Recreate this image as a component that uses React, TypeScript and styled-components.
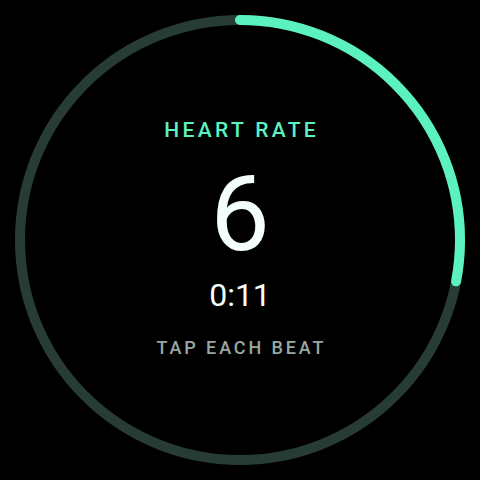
import React from "react";
import styled, { createGlobalStyle } from "styled-components";

const Global = createGlobalStyle`
  html, body { margin: 0; padding: 0; background: #000; }
  body { font-family: Roboto, "Noto Sans", sans-serif; }
`;

const Screen = styled.div`
  width: 480px;
  height: 480px;
  background: #000;
  display: grid;
  place-items: center;
  overflow: hidden;
`;

const Ring = styled.svg`
  grid-area: 1 / 1;
  width: 480px;
  height: 480px;
  display: block;
`;

const Content = styled.div`
  grid-area: 1 / 1;
  align-self: start;
  display: flex;
  flex-direction: column;
  align-items: center;
  padding-top: 119.5px;
`;

const Label = styled.div<{ $tone: "accent" | "muted"; $size: number; $gap: number }>`
  font-size: ${(p) => p.$size}px;
  line-height: 1;
  font-weight: 500;
  letter-spacing: 0.16em;
  padding-left: 0.16em;
  color: ${(p) => (p.$tone === "accent" ? "#5cf2c0" : "#9aa8a2")};
  margin-top: ${(p) => p.$gap}px;
`;

const Count = styled.div`
  font-size: 106px;
  line-height: 1;
  font-weight: 400;
  color: #f4fff9;
  margin-top: 20.5px;
`;

const Timer = styled.div`
  font-size: 32px;
  line-height: 1;
  font-weight: 400;
  color: #f4fff9;
  margin-top: 12px;
`;

const R = 220;
const C = 2 * Math.PI * R;
const progress = 0.28;

export default function App() {
  return (
    <>
      <Global />
      <Screen>
        <Ring viewBox="0 0 480 480">
          <circle cx="240" cy="240" r={R} fill="none" stroke="#263c34" strokeWidth="10" />
          <circle
            cx="240"
            cy="240"
            r={R}
            fill="none"
            stroke="#5cf2c0"
            strokeWidth="10"
            strokeLinecap="round"
            strokeDasharray={`${C * progress} ${C}`}
            transform="rotate(-90 240 240)"
          />
        </Ring>
        <Content>
          <Label $tone="accent" $size={21} $gap={0}>HEART RATE</Label>
          <Count>6</Count>
          <Timer>0:11</Timer>
          <Label $tone="muted" $size={18} $gap={27.5}>TAP EACH BEAT</Label>
        </Content>
      </Screen>
    </>
  );
}
